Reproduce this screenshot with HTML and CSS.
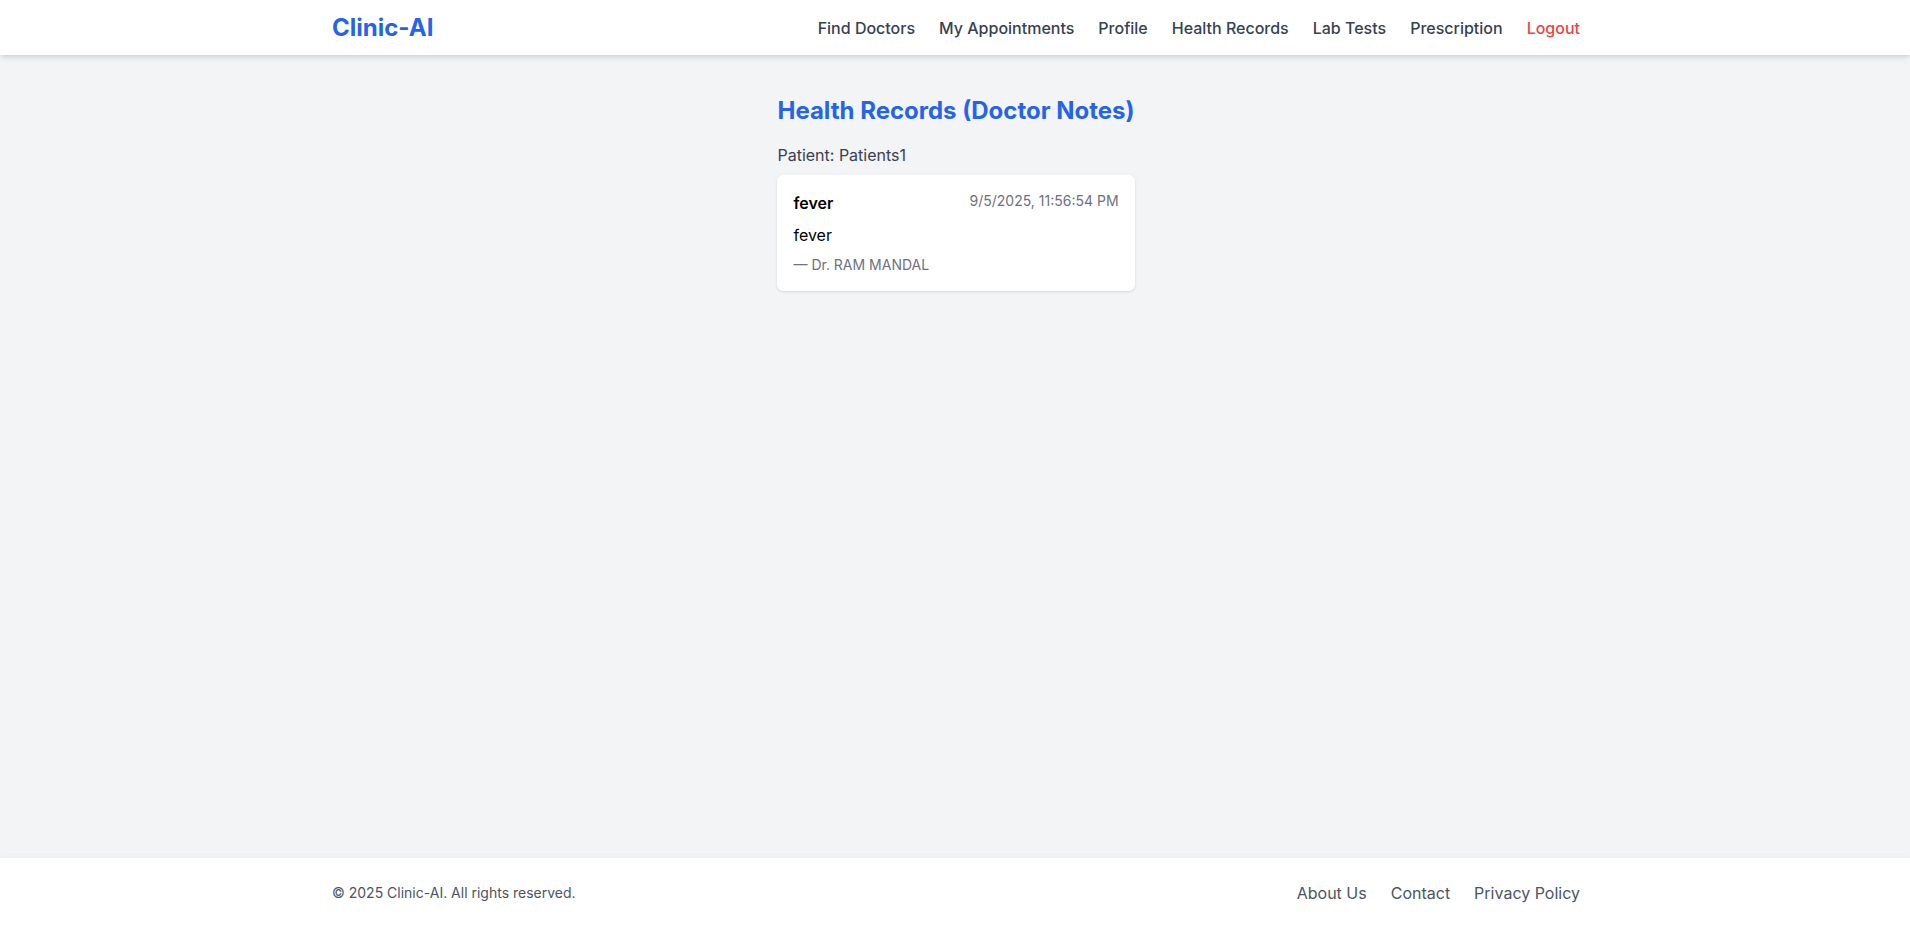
FILE: index.html
```html
<!DOCTYPE html>
<html lang="en">
<head>
<meta charset="utf-8">
<title>Clinic-AI</title>
<link rel="stylesheet" href="styles.css">
</head>
<body>
<div class="page">
  <header class="site-header">
    <div class="container header-inner">
      <a class="logo" href="#">Clinic-AI</a>
      <nav class="nav">
        <a href="#">Find Doctors</a>
        <a href="#">My Appointments</a>
        <a href="#">Profile</a>
        <a href="#">Health Records</a>
        <a href="#">Lab Tests</a>
        <a href="#">Prescription</a>
        <a href="#" class="logout">Logout</a>
      </nav>
    </div>
  </header>

  <main class="main">
    <section class="records">
      <h1 class="records-title">Health Records (Doctor Notes)</h1>
      <p class="patient">Patient: Patients1</p>
      <div class="note-card">
        <div class="note-head">
          <span class="note-title">fever</span>
          <span class="note-date">9/5/2025, 11:56:54 PM</span>
        </div>
        <p class="note-body">fever</p>
        <p class="note-doctor">— Dr. RAM MANDAL</p>
      </div>
    </section>
  </main>

  <footer class="site-footer">
    <div class="container footer-inner">
      <p class="copyright">© 2025 Clinic-AI. All rights reserved.</p>
      <nav class="footer-links">
        <a href="#">About Us</a>
        <a href="#">Contact</a>
        <a href="#">Privacy Policy</a>
      </nav>
    </div>
  </footer>
</div>
</body>
</html>
```
FILE: styles.css
```css
* { box-sizing: border-box; }
html, body { margin: 0; padding: 0; }
body {
  font-family: Inter, "Noto Sans", "Liberation Sans", sans-serif;
  background: #f3f4f6;
  color: #111827;
}
a { text-decoration: none; }
p { margin: 0; }

.page {
  min-height: 100vh;
  display: flex;
  flex-direction: column;
}

.container {
  max-width: 1280px;
  margin: 0 auto;
  padding: 0 15px 0 17px;
  width: 100%;
}

.site-header {
  background: #fff;
  box-shadow: 0 4px 6px -1px rgba(0,0,0,0.1), 0 2px 4px -2px rgba(0,0,0,0.1);
  position: relative;
  z-index: 1;
}
.header-inner {
  height: 55px;
  display: flex;
  align-items: center;
  justify-content: space-between;
}
.logo {
  font-size: 24px;
  line-height: 32px;
  font-weight: 700;
  color: #2563eb;
}
.nav {
  display: flex;
  gap: 24px;
}
.nav a {
  font-size: 16px;
  line-height: 24px;
  font-weight: 500;
  color: #374151;
}
.nav a.logout { color: #ef4444; }

.main {
  flex: 1;
  display: flex;
  justify-content: center;
  padding: 40px 15px 40px 17px;
}
.records {
  width: max-content;
}
.records-title {
  margin: 0 0 16px;
  font-size: 24px;
  line-height: 32px;
  font-weight: 700;
  color: #2563eb;
}
.patient {
  font-size: 16px;
  line-height: 24px;
  color: #374151;
  margin-bottom: 8px;
}
.note-card {
  background: #fff;
  border-radius: 6px;
  box-shadow: 0 1px 3px 0 rgba(0,0,0,0.1), 0 1px 2px -1px rgba(0,0,0,0.1);
  padding: 16px;
}
.note-head {
  display: flex;
  justify-content: space-between;
  align-items: flex-start;
}
.note-title {
  font-size: 16px;
  line-height: 24px;
  font-weight: 600;
  color: #000;
}
.note-date {
  font-size: 14px;
  line-height: 20px;
  color: #6b7280;
}
.note-body {
  margin-top: 8px;
  font-size: 16px;
  line-height: 24px;
  color: #000;
}
.note-doctor {
  margin-top: 8px;
  font-size: 14px;
  line-height: 20px;
  color: #6b7280;
}

.site-footer {
  background: #fff;
  box-shadow: 0 -2px 6px rgba(0,0,0,0.02);
}
.footer-inner {
  height: 70px;
  display: flex;
  align-items: center;
  justify-content: space-between;
}
.copyright {
  font-size: 14px;
  line-height: 20px;
  color: #4b5563;
}
.footer-links {
  display: flex;
  gap: 24px;
}
.footer-links a {
  font-size: 16px;
  line-height: 24px;
  color: #4b5563;
}
```
